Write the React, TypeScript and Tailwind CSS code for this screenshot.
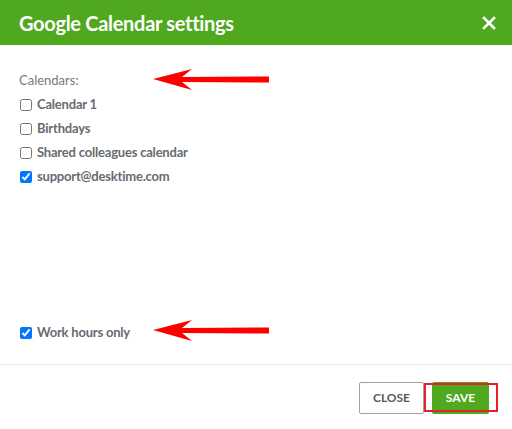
import React, { useState } from "react";

const calendars = [
  { id: "cal1", label: "Calendar 1", checked: false },
  { id: "birthdays", label: "Birthdays", checked: false },
  { id: "shared", label: "Shared colleagues calendar", checked: false },
  { id: "support", label: "support@desktime.com", checked: true },
];

function Arrow({ top }: { top: string }) {
  // red annotation arrow pointing left
  return (
    <svg
      className={`absolute left-[150px] ${top} pointer-events-none`}
      width="122"
      height="22"
      viewBox="0 0 122 22"
    >
      <polygon
        points="3,10 42,0 32,8 119,7.5 119,13.5 32,13 42,21"
        fill="#ff0000"
      />
    </svg>
  );
}

export default function App() {
  const [selected, setSelected] = useState<Record<string, boolean>>(
    Object.fromEntries(calendars.map((c) => [c.id, c.checked]))
  );
  const [workHours, setWorkHours] = useState(true);

  return (
    <div className="relative w-[512px] h-[429px] bg-white overflow-hidden font-['Lato','Open_Sans',sans-serif]">
      <div className="h-[45px] bg-[#4fa81e] flex items-center justify-between pl-[19px] pr-[16px]">
        <h2 className="text-[20px] font-bold text-white tracking-[-0.3px]">
          Google Calendar settings
        </h2>
        <button className="text-white" aria-label="Close">
          <svg width="14" height="14" viewBox="0 0 14 14">
            <path
              d="M2 2L12 12M12 2L2 12"
              stroke="currentColor"
              strokeWidth="2.6"
              strokeLinecap="square"
            />
          </svg>
        </button>
      </div>

      <div className="h-[319px] flex flex-col justify-between pt-[25px] pb-[19px] pl-[19px]">
        <div>
          <div className="text-[13px] leading-[20px] text-[#767b80] mb-[3px]">
            Calendars:
          </div>
          {calendars.map((c) => (
            <label
              key={c.id}
              className="flex items-center h-[24px] text-[13px] tracking-[-0.2px] text-[#686c71] font-bold"
            >
              <input
                type="checkbox"
                checked={selected[c.id]}
                onChange={(e) =>
                  setSelected({ ...selected, [c.id]: e.target.checked })
                }
                className="w-[12px] h-[12px] ml-[1px] mr-[5px] accent-[#0075ff]"
              />
              <span>{c.label}</span>
            </label>
          ))}
        </div>
        <label className="flex items-center h-[24px] text-[13px] tracking-[-0.2px] text-[#686c71] font-bold">
          <input
            type="checkbox"
            checked={workHours}
            onChange={(e) => setWorkHours(e.target.checked)}
            className="w-[12px] h-[12px] ml-[1px] mr-[5px] accent-[#0075ff]"
          />
          Work hours only
        </label>
      </div>

      <div className="border-t border-[#e5e5e5] flex justify-end gap-[8px] pt-[17px] pr-[23px]">
        <button className="h-[32px] w-[65px] border border-[#a0a0a0] rounded-[2px] text-[12px] font-bold text-[#555b61]">
          CLOSE
        </button>
        <div className="relative">
          <button className="h-[32px] w-[57px] bg-[#4fa81e] rounded-[2px] text-[12px] font-bold text-white">
            SAVE
          </button>
          <div className="absolute left-[-8px] top-[1px] w-[74px] h-[29px] border-2 border-[#e8202a] pointer-events-none" />
        </div>
      </div>

      <Arrow top="top-[69px]" />
      <Arrow top="top-[320px]" />
    </div>
  );
}
